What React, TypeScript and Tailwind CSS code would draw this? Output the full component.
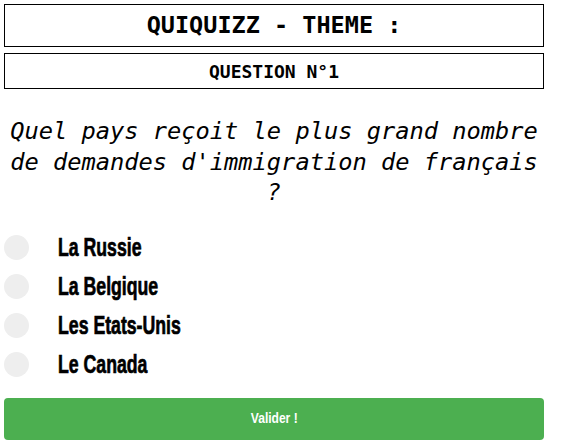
const ANSWERS = ["La Russie", "La Belgique", "Les Etats-Unis", "Le Canada"];

export default function App() {
  return (
    <div className="min-h-[440px] bg-white px-1 pt-1">
      <div className="flex w-[540px] flex-col">
        <div className="flex h-[43px] items-center justify-center border border-black font-['DejaVu_Sans_Mono',monospace] text-[23.5px] font-bold text-black">
          QUIQUIZZ - THEME :
        </div>
        <div className="mt-[6px] flex h-[36px] items-center justify-center border border-black font-['DejaVu_Sans_Mono',monospace] text-[18px] font-bold text-black">
          QUESTION N°1
        </div>

        <p className="mt-[27px] text-center font-['DejaVu_Sans_Mono',monospace] text-[23.7px] italic leading-[30.5px] text-black">
          Quel pays reçoit le plus grand nombre de demandes d'immigration de français ?
        </p>

        <ul className="mt-[27px] flex flex-col gap-[14px]">
          {ANSWERS.map((a) => (
            <li key={a} className="flex h-[25px] items-center">
              <span className="h-[25px] w-[25px] shrink-0 rounded-full bg-[#eeeeee]" />
              <span className="ml-[29px] origin-left scale-x-[0.68] whitespace-nowrap font-['Impact','Liberation_Sans',sans-serif] text-[26px] font-bold text-black [-webkit-text-stroke:0.7px_black]">
                {a}
              </span>
            </li>
          ))}
        </ul>

        <button className="mt-[21px] flex h-[42px] w-full items-center justify-center rounded-[4px] bg-[#4caf50] text-white">
          <span className="scale-x-[0.86] font-['Liberation_Sans',Arial,sans-serif] text-[14px] font-bold">
            Valider !
          </span>
        </button>
      </div>
    </div>
  );
}
